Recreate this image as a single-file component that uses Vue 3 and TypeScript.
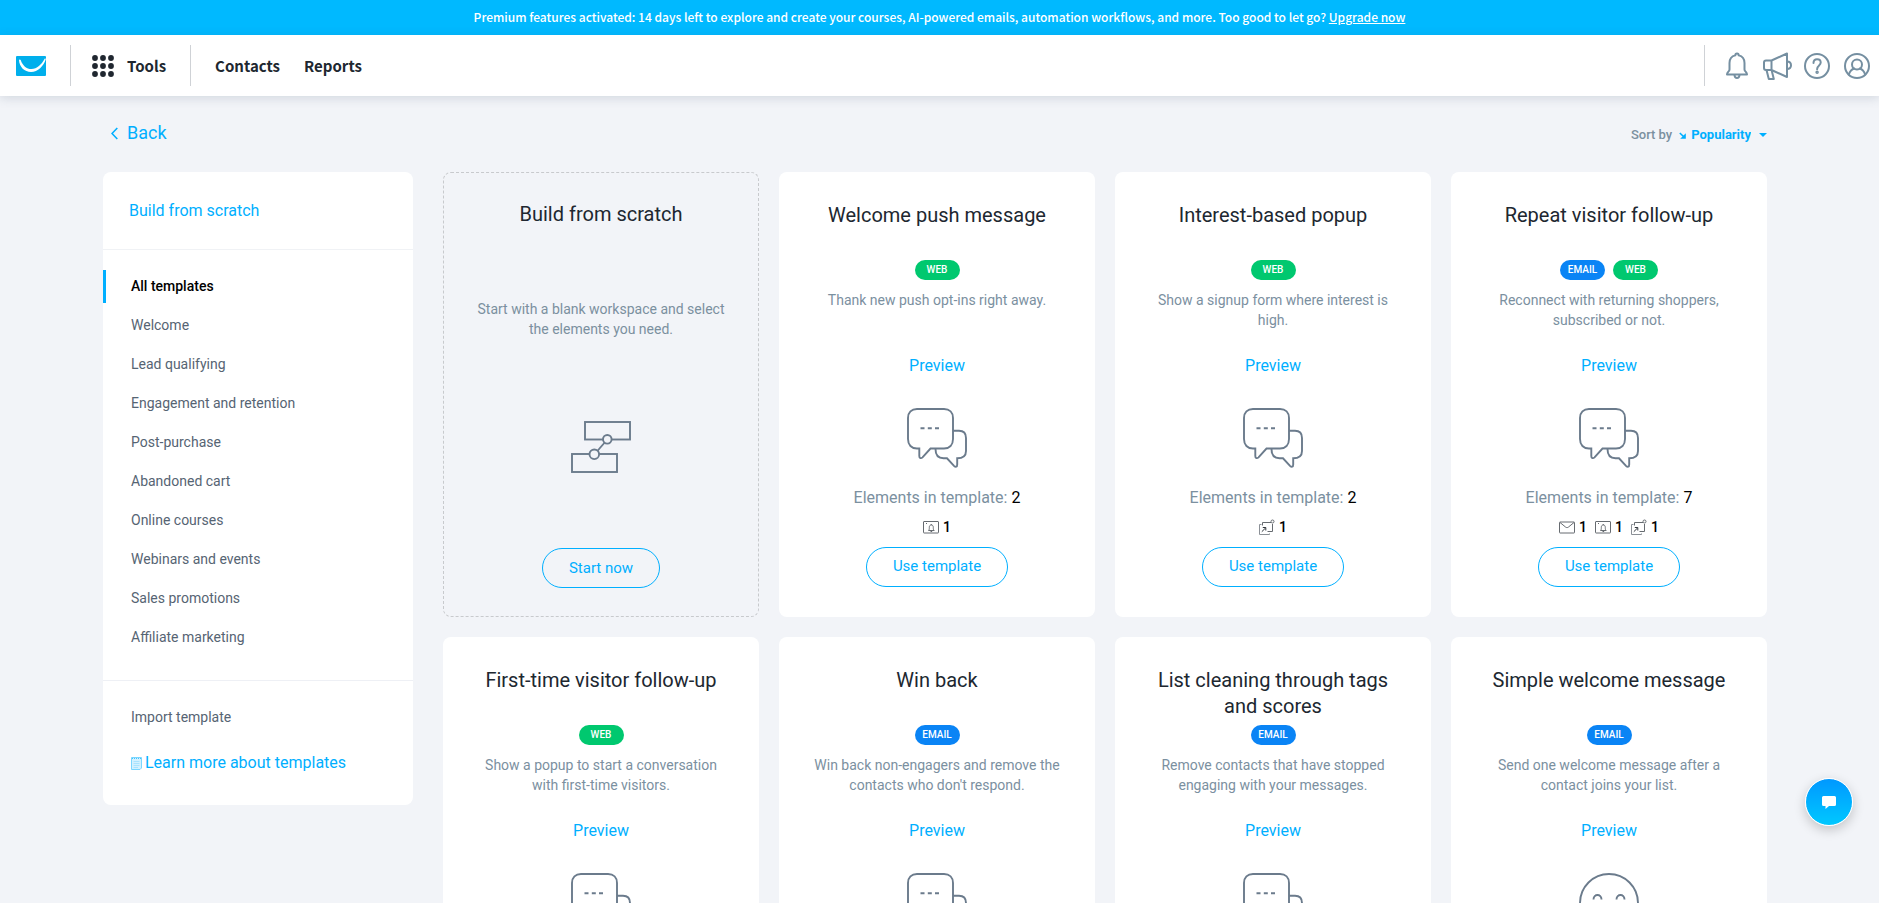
<script setup lang="ts">
import { ref } from 'vue'

type Channel = 'email' | 'web'
type ElementKind = 'mail' | 'push' | 'popup'

interface Template {
  title: string
  channels: Channel[]
  description: string
  art: 'chat' | 'smile'
  total: number
  elements: ElementKind[]
}

const categories: string[] = [
  'All templates',
  'Welcome',
  'Lead qualifying',
  'Engagement and retention',
  'Post-purchase',
  'Abandoned cart',
  'Online courses',
  'Webinars and events',
  'Sales promotions',
  'Affiliate marketing',
]

const active = ref('All templates')
const sort = ref('Popularity')

const templates: Template[] = [
  { title: 'Welcome push message', channels: ['web'], description: 'Thank new push opt-ins right away.', art: 'chat', total: 2, elements: ['push'] },
  { title: 'Interest-based popup', channels: ['web'], description: 'Show a signup form where interest is high.', art: 'chat', total: 2, elements: ['popup'] },
  { title: 'Repeat visitor follow-up', channels: ['email', 'web'], description: 'Reconnect with returning shoppers, subscribed or not.', art: 'chat', total: 7, elements: ['mail', 'push', 'popup'] },
  { title: 'First-time visitor follow-up', channels: ['web'], description: 'Show a popup to start a conversation with first-time visitors.', art: 'chat', total: 2, elements: ['popup'] },
  { title: 'Win back', channels: ['email'], description: "Win back non-engagers and remove the contacts who don't respond.", art: 'chat', total: 2, elements: ['mail'] },
  { title: 'List cleaning through tags and scores', channels: ['email'], description: 'Remove contacts that have stopped engaging with your messages.', art: 'chat', total: 2, elements: ['mail'] },
  { title: 'Simple welcome message', channels: ['email'], description: 'Send one welcome message after a contact joins your list.', art: 'smile', total: 2, elements: ['mail'] },
]
</script>

<template>
  <div class="page">
    <div class="banner">
      Premium features activated: 14 days left to explore and create your courses, AI-powered emails, automation workflows, and more. Too good to let go? <a href="#">Upgrade now</a>
    </div>

    <header class="topbar">
      <nav class="nav">
        <a href="#" class="logo" aria-label="Home">
          <svg width="30" height="20" viewBox="0 0 30 20">
            <rect width="30" height="20" rx="1" fill="#00afec" />
            <path d="M3 4C3 3.300 4.400 3 4.800 4.200C6.500 9.500 10.500 13 15.500 13C21 13 25.500 8.500 28.500 3C29 2.300 30 2.500 29.700 3.500C27.500 10 22 16 15 16C8.500 16 3.300 11 3 4Z" fill="#fff" />
          </svg>
        </a>
        <span class="rule"></span>
        <a href="#" class="tools">
          <svg width="22" height="22" viewBox="0 0 22 22" fill="#202730">
            <template v-for="y in [3, 11, 19]" :key="y">
              <circle v-for="x in [3, 11, 19]" :key="x" :cx="x" :cy="y" r="2.900" />
            </template>
          </svg>
          Tools
        </a>
        <span class="rule"></span>
        <a href="#" class="link">Contacts</a>
        <a href="#" class="link">Reports</a>
      </nav>
      <div class="actions">
        <span class="rule"></span>
        <button type="button" class="icon-btn bell" aria-label="Notifications">
          <svg width="22" height="28" viewBox="0 0 22 28">
            <path d="M11 1.500C10 1.500 9.300 2.200 9.300 3.400C5.500 4.300 3.500 7.500 3.500 11V17.500C3.500 19.500 1 20 1 22.500H21C21 20 18.500 19.500 18.500 17.500V11C18.500 7.500 16.500 4.300 12.700 3.400C12.700 2.200 12 1.500 11 1.500Z" />
            <path d="M8.500 23C8.700 25.500 9.600 26 11 26S13.300 25.500 13.500 23" />
          </svg>
        </button>
        <button type="button" class="icon-btn horn" aria-label="News">
          <svg width="29" height="28" viewBox="0 0 29 28">
            <path d="M8.500 8.500L24 1.500V25L8.500 18H3C1.800 18 1 17.200 1 16V10.500C1 9.300 1.800 8.500 3 8.500ZM8.500 8.500V18" />
            <path d="M24 9.500C26.500 9.500 28 11 28 13.300S26.500 17 24 17" />
            <path d="M3.500 18L5.800 27H10.800L8.700 18.500" />
          </svg>
        </button>
        <button type="button" class="icon-btn" aria-label="Help">
          <svg width="26" height="28" viewBox="0 0 26 28">
            <circle cx="13" cy="14" r="12" />
            <path d="M9.500 11C9.500 8.600 11 7.300 13.100 7.300C15.300 7.300 16.700 8.700 16.700 10.600C16.700 13.500 13.100 13.500 13.100 17.200" stroke-width="2" />
            <circle cx="13.100" cy="20.300" r="1" stroke-width="1.500" />
          </svg>
        </button>
        <button type="button" class="icon-btn user" aria-label="Account">
          <svg width="26" height="28" viewBox="0 0 26 28">
            <circle cx="13" cy="14" r="12" />
            <circle cx="13" cy="12.500" r="5" />
            <path d="M4.800 22.500C6.200 18.500 8.500 17 10.300 16.500M21.200 22.500C19.800 18.500 17.500 17 15.700 16.500" />
          </svg>
        </button>
      </div>
    </header>

    <main class="content">
      <div class="toolbar">
        <a href="#" class="back">
          <svg width="7" height="13" viewBox="0 0 7 13"><path d="M6.300 1L1 6.500L6.300 12" /></svg>
          Back
        </a>
        <div class="sort">
          <label for="sort">Sort by</label>
          <svg width="7" height="7" viewBox="0 0 7 7" class="arrow"><path d="M0.800 1L4.500 4.500" /><path d="M6.800 1.200V6.800H1.200Z" /></svg>
          <select id="sort" v-model="sort">
            <option>Popularity</option>
            <option>Name</option>
          </select>
          <svg width="8" height="4" viewBox="0 0 8 4" class="caret"><path d="M0 0H8L4 4Z" /></svg>
        </div>
      </div>

      <div class="columns">
        <aside class="sidebar">
          <div class="side-top"><a href="#">Build from scratch</a></div>
          <ul class="cats">
            <li v-for="c in categories" :key="c">
              <a href="#" :class="{ active: c === active }" @click.prevent="active = c">{{ c }}</a>
            </li>
          </ul>
          <div class="side-bottom">
            <a href="#" class="import">Import template</a>
            <a href="#" class="learn">
              <svg width="11" height="14" viewBox="0 0 11 14">
                <path d="M0.500 1.500H10.500V12L9 13.500H0.500Z" fill="#d3f1ff" stroke="#7bd6ff" />
                <path d="M1 2.500H10" stroke="#40c4ff" stroke-dasharray="1 1" />
                <path d="M2.500 5.500H8.500M2.500 7.500H8.500M2.500 9.500H8.500M2.500 11.500H7" stroke="#a8e3ff" />
              </svg>
              Learn more about templates
            </a>
          </div>
        </aside>

        <section class="grid">
          <article class="card scratch">
            <h2>Build from scratch</h2>
            <p>Start with a blank workspace and select the elements you need.</p>
            <svg class="flow" width="60" height="52" viewBox="0 0 60 52">
              <rect x="14" y="1" width="45" height="17.500" />
              <rect x="1" y="33" width="45" height="18" />
              <path d="M36.300 18.500L23.300 33.500" />
              <circle cx="36.300" cy="18.300" r="4.300" />
              <circle cx="23.300" cy="33.300" r="4.800" />
            </svg>
            <button type="button" class="pill">Start now</button>
          </article>

          <article v-for="t in templates" :key="t.title" class="card">
            <h2>{{ t.title }}</h2>
            <div class="badges">
              <span v-for="ch in t.channels" :key="ch" class="badge" :class="ch">{{ ch.toUpperCase() }}</span>
            </div>
            <p>{{ t.description }}</p>
            <a href="#" class="preview">Preview</a>
            <svg v-if="t.art === 'chat'" class="art" width="60" height="60" viewBox="0 0 60 60">
              <path d="M10 1H37C42.500 1 46 4.500 46 10V31C46 37 42.500 40.500 37 40.500H23.500L15.500 49.300C14 50.800 12.300 50.300 12.300 48V40.500H10C4.500 40.500 1 37 1 31V10C1 4.500 4.500 1 10 1Z" />
              <path d="M46 22.800H52C56.500 22.800 59 25.500 59 30V43C59 48 56.500 50.300 50.200 50.300V56.500C50.200 59 48.700 59.500 47 57.800L40 50.300H36.500C31 50.300 28.500 47.500 28.500 41" />
              <path d="M13.500 20.300H17.500M20.800 20.300H24.800M28 20.300H32" />
            </svg>
            <svg v-else class="art" width="60" height="60" viewBox="0 0 60 60">
              <circle cx="30" cy="30" r="29" />
              <path d="M14.500 26.500C14.500 20.500 22.500 20.500 22.500 26.500M37.500 26.500C37.500 20.500 45.500 20.500 45.500 26.500M16 38C20 48 40 48 44 38" />
            </svg>
            <div class="total">Elements in template: <b>{{ t.total }}</b></div>
            <ul class="elements">
              <li v-for="e in t.elements" :key="e">
                <svg width="16" height="16" viewBox="0 0 16 16">
                  <template v-if="e === 'mail'">
                    <rect x="0.500" y="3" width="15" height="11" rx="0.500" />
                    <path d="M1 3.500L6.500 8C7.500 8.800 8.500 8.800 9.500 8L15 3.500" />
                  </template>
                  <template v-else-if="e === 'push'">
                    <rect x="0.500" y="2.500" width="15" height="11.500" rx="0.500" />
                    <path d="M5.500 11.500C6.300 10.800 6.300 10 6.300 8.500C6.300 6.800 7 6 8.300 6S10.300 6.800 10.300 8.500C10.300 10 10.300 10.800 11.200 11.500ZM8.300 5V6M7.500 12.500H9.200M3 4.500H4" />
                  </template>
                  <template v-else>
                    <path d="M3.500 6.500V3.500H12M13.500 5V12.500H8.500" />
                    <path d="M2.500 5.500H0.500V15.500H10.500V14.500" stroke="#8b9096" />
                    <path d="M2.800 12.700L6.500 9M3.800 8.500H6.800V11.500" stroke="#30363c" />
                    <circle cx="13.500" cy="2.500" r="1.500" />
                  </template>
                </svg>
                <b>1</b>
              </li>
            </ul>
            <button type="button" class="pill">Use template</button>
          </article>
        </section>
      </div>
    </main>

    <button type="button" class="chat" aria-label="Open chat">
      <svg width="14" height="13" viewBox="0 0 14 13"><path d="M1.500 0H12.500Q14 0 14 1.500V8.500Q14 10 12.500 10H7L3.500 13V10H1.500Q0 10 0 8.500V1.500Q0 0 1.500 0Z" fill="#fff" /></svg>
    </button>
  </div>
</template>

<style>
html {
  scrollbar-width: none;
}
body {
  margin: 0;
  background: #f2f4f8;
}
</style>

<style scoped>
* {
  box-sizing: border-box;
}
.page {
  min-height: 100vh;
  background: #f2f4f8;
  font-family: Roboto, "Liberation Sans", sans-serif;
  color: #202730;
}
a {
  color: #00afff;
  text-decoration: none;
}
button,
select {
  font-family: inherit;
  cursor: pointer;
}
h2,
p,
ul {
  margin: 0;
  padding: 0;
}
ul {
  list-style: none;
}
svg {
  display: block;
  flex: none;
}

.banner {
  height: 35px;
  padding: 0 16px;
  background: #00b9ff;
  color: #fff;
  font: 500 12px/34px "Noto Sans CJK SC", "Noto Sans", sans-serif;
  text-align: center;
  white-space: nowrap;
}
.banner a {
  color: #fff;
  text-decoration: underline;
}

.topbar {
  display: flex;
  align-items: center;
  justify-content: space-between;
  height: 61px;
  padding: 0 9px 0 16px;
  background: #fff;
  box-shadow: 0 2px 10px rgba(60, 85, 110, 0.18);
}
.nav,
.actions {
  display: flex;
  align-items: center;
}
.rule {
  width: 1px;
  height: 41px;
  background: #cfd2d6;
}
.nav .rule {
  margin-left: 24px;
}
.tools,
.link {
  display: flex;
  align-items: center;
  color: #202730;
  font: 700 15px/24px "Noto Sans CJK SC", "Noto Sans", sans-serif;
}
.tools {
  gap: 13px;
  margin-left: 21px;
}
.link {
  margin-left: 24px;
}
.icon-btn {
  margin-left: 12px;
  padding: 0;
  border: 0;
  background: none;
}
.icon-btn.bell {
  margin-left: 21px;
}
.icon-btn.horn,
.icon-btn.user {
  margin-left: 14px;
}
.icon-btn.horn {
  margin-left: 15px;
}
.icon-btn svg {
  fill: none;
  stroke: #758fa1;
  stroke-width: 2;
  stroke-linejoin: round;
  stroke-linecap: round;
}

.content {
  padding: 25px 112px 20px 103px;
}
.toolbar {
  display: flex;
  align-items: center;
  justify-content: space-between;
  height: 24px;
  margin-bottom: 27px;
  padding-left: 8px;
}
.back {
  display: flex;
  align-items: center;
  gap: 9px;
  font-size: 18px;
  line-height: 24px;
}
.back svg {
  fill: none;
  stroke: #00afff;
  stroke-width: 1.6;
}
.sort {
  display: flex;
  align-items: center;
  padding-top: 4px;
  color: #7b909f;
  font-size: 13px;
  font-weight: 500;
  line-height: 20px;
}
.sort select {
  field-sizing: content;
  appearance: none;
  margin: 0 8px 0 5px;
  padding: 0;
  border: 0;
  background: none;
  color: #00afff;
  font-size: 13px;
  font-weight: 700;
  line-height: 20px;
}
.arrow {
  margin-left: 7px;
  fill: #00afff;
  stroke: #00afff;
  stroke-width: 1.6;
}
.arrow path + path {
  stroke: none;
}
.caret {
  fill: #00afff;
}

.columns {
  display: flex;
  align-items: flex-start;
  gap: 30px;
}
.sidebar {
  flex: none;
  width: 310px;
  border-radius: 8px;
  background: #fff;
  font-size: 14px;
}
.side-top {
  padding: 27px 26px 26px;
  font-size: 16px;
  line-height: 24px;
}
.cats {
  display: flex;
  flex-direction: column;
  gap: 6px;
  padding: 20px 0 26px;
  border-top: 1px solid #f0f2f5;
  border-bottom: 1px solid #eef0f5;
}
.cats a,
.import {
  display: block;
  line-height: 33px;
  color: #566473;
}
.cats a {
  padding-left: 25px;
  border-left: 3px solid transparent;
}
.cats a.active {
  border-left-color: #00afff;
  color: #000;
  font-weight: 500;
}
.side-bottom {
  padding: 20px 28px 30px;
}
.learn {
  display: flex;
  align-items: center;
  gap: 3px;
  margin-top: 17px;
  font-size: 16px;
  line-height: 24px;
}

.grid {
  flex: 1;
  display: grid;
  grid-template-columns: repeat(4, minmax(0, 1fr));
  gap: 20px;
}
.card {
  display: flex;
  flex-direction: column;
  align-items: center;
  padding: 30px 28px;
  border-radius: 8px;
  background: #fff;
  text-align: center;
}
.card h2 {
  min-height: 52px;
  font-size: 20px;
  font-weight: 400;
  line-height: 26px;
}
.badges {
  display: flex;
  gap: 8px;
  margin-top: 6px;
}
.badge {
  width: 45px;
  border-radius: 10px;
  color: #fff;
  font-size: 10px;
  font-weight: 500;
  line-height: 20px;
}
.badge.web {
  background: #00c86f;
}
.badge.email {
  background: #0a84f5;
}
.card p {
  min-height: 40px;
  margin-top: 10px;
  color: #7b909f;
  font-size: 14px;
  line-height: 20px;
}
.preview {
  margin-top: 24px;
  font-size: 16px;
  line-height: 24px;
}
.art,
.flow {
  fill: none;
  stroke: #6b7b8c;
  stroke-width: 1.9;
}
.art {
  margin-top: 30px;
}
.total {
  margin-top: 18px;
  color: #7b909f;
  font-size: 16px;
  line-height: 24px;
}
.total b {
  color: #000;
  font-weight: 400;
}
.elements {
  display: flex;
  gap: 8px;
  margin-top: 7px;
}
.elements li {
  display: flex;
  align-items: center;
  gap: 4px;
  color: #000;
  font-size: 14px;
  line-height: 20px;
}
.elements b {
  font-weight: 500;
}
.elements svg {
  fill: none;
  stroke: #666b70;
  stroke-width: 1;
}
.pill {
  height: 40px;
  margin-top: 10px;
  padding: 0 26px 2px;
  border: 1px solid #00afff;
  border-radius: 20px;
  background: none;
  color: #00afff;
  font-size: 15px;
}

.scratch {
  padding: 28px 26px;
  border: 1px dashed #c8cacd;
  background: none;
}
.scratch h2 {
  min-height: 26px;
}
.scratch p {
  margin-top: 72px;
}
.flow {
  margin-top: 82px;
}
.flow circle {
  fill: #f2f4f8;
}
.scratch .pill {
  margin-top: 75px;
  padding-bottom: 0;
}

.chat {
  position: fixed;
  right: 26px;
  bottom: 77px;
  display: flex;
  align-items: center;
  justify-content: center;
  width: 48px;
  height: 48px;
  padding: 0;
  border: 1px solid #fff;
  border-radius: 50%;
  background: linear-gradient(#0098ff, #00c8ff);
  box-shadow: 0 4px 12px rgba(0, 0, 0, 0.2);
}
</style>
